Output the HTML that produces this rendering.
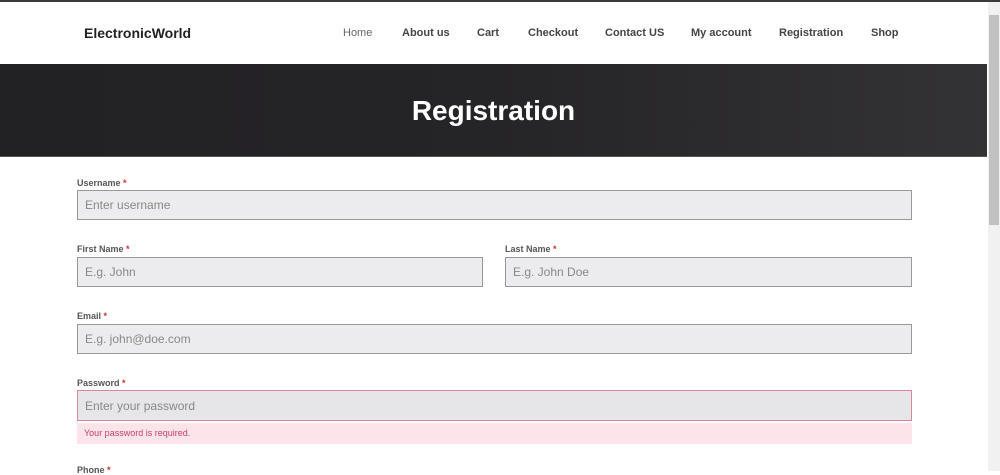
<!DOCTYPE html>
<html><head><style>
body{margin:0;width:1000px;height:471px;overflow:hidden;background:#fff;font-family:"Liberation Sans",sans-serif;position:relative}
.top{position:absolute;left:0;top:0;width:1000px;height:2px;background:#3a3a3a}
.logo{position:absolute;left:84px;top:25px;font-size:14px;font-weight:bold;color:#222}
.nav a{position:absolute;top:27px;font-size:11px;font-weight:bold;color:#444;text-decoration:none}
.banner{position:absolute;left:0;top:64px;width:987px;height:92px;background:linear-gradient(90deg,#222124,#252427 50%,#333234);border-bottom:1px solid #555}
.banner h1{margin:0;text-align:center;color:#fff;font-size:28px;line-height:94px}
.sb{position:absolute;left:988px;top:2px;width:12px;height:469px;background:#f1f1f1}
.sb div{position:absolute;left:1px;top:13px;width:10px;height:210px;background:#c1c1c1}
label{position:absolute;font-size:9px;font-weight:bold;color:#555}
label span{color:#c33}
.in{position:absolute;height:27px;background:#ececee;border:1px solid #999;box-sizing:border-box;font-size:12px;color:#888;padding-left:7px;line-height:27px}
</style></head><body>
<div class="top"></div>
<div class="logo">ElectronicWorld</div>
<div class="nav">
<a style="left:343px;font-weight:normal;color:#666">Home</a>
<a style="left:402px">About us</a>
<a style="left:477px">Cart</a>
<a style="left:528px">Checkout</a>
<a style="left:605px">Contact US</a>
<a style="left:691px">My account</a>
<a style="left:779px">Registration</a>
<a style="left:871px">Shop</a>
</div>
<div class="banner"><h1>Registration</h1></div>
<div class="sb"><div></div></div>
<label style="left:77px;top:178px">Username <span>*</span></label>
<div class="in" style="left:77px;top:190px;width:835px;height:30px;line-height:29px">Enter username</div>
<label style="left:77px;top:244px">First Name <span>*</span></label>
<div class="in" style="left:77px;top:257px;width:406px;height:30px;line-height:29px">E.g. John</div>
<label style="left:505px;top:244px">Last Name <span>*</span></label>
<div class="in" style="left:505px;top:257px;width:407px;height:30px;line-height:29px">E.g. John Doe</div>
<label style="left:77px;top:311px">Email <span>*</span></label>
<div class="in" style="left:77px;top:324px;width:835px;height:30px;line-height:29px">E.g. john@doe.com</div>
<label style="left:77px;top:378px">Password <span>*</span></label>
<div class="in" style="left:77px;top:390px;width:835px;height:31px;line-height:30px;border-color:#d8889a;background:#e6e6e8">Enter your password</div>
<div style="position:absolute;left:77px;top:423px;width:835px;height:21px;background:#fce4ea;color:#c5406a;font-size:9px;line-height:21px;padding-left:7px;box-sizing:border-box">Your password is required.</div>
<label style="left:77px;top:465px">Phone <span>*</span></label>
</body></html>
